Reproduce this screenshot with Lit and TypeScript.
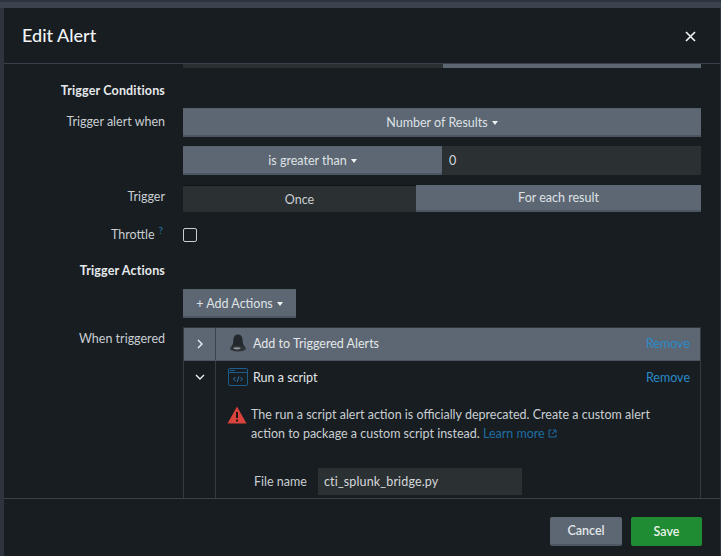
import { LitElement, html, css } from 'lit';
import { customElement } from 'lit/decorators.js';

@customElement('app-root')
export class AppRoot extends LitElement {
  static styles = css`
    :host {
      display: block;
      width: 721px;
      height: 556px;
      overflow: hidden;
      background: #2d343d;
      font-family: Lato, 'Liberation Sans', sans-serif;
      font-size: 12.5px;
      color: #c9ced2;
    }
    .top { height: 6px; margin-top: 2px; background: #3b444e; }
    .modal {
      margin: 0 1px 0 4px;
      height: 548px;
      background: #171d21;
      display: flex;
      flex-direction: column;
    }
    .head {
      flex: none;
      border-bottom: 1px solid #37424d;
      display: flex;
      align-items: center;
      justify-content: space-between;
      padding: 0 24px 2px 18px;
      box-sizing: border-box;
      height: 56px;
    }
    .head h1 {
      margin: 0;
      font-size: 18px;
      font-weight: 500;
      color: #f2f4f5;
    }
    .close { display: block; margin-top: 4px; }
    .body {
      flex: 1;
      min-height: 0;
      overflow: hidden;
      display: grid;
      grid-template-columns: 161px 518px;
      column-gap: 18px;
      align-content: start;
    }
    .sliver { grid-column: 2; display: flex; height: 4px; margin-bottom: 15px; }
    .sliver i { display: block; height: 4px; }
    .sliver .a { width: 260px; background: #2b3033; }
    .sliver .b { flex: 1; background: #5c6773; }
    .label { text-align: right; line-height: 28px; }
    .heading { font-weight: 700; color: #e6e9eb; line-height: 16px; letter-spacing: 0.15px; }
    .conditions-head { margin-bottom: 9px; }
    .btn {
      box-sizing: border-box;
      display: flex;
      align-items: center;
      justify-content: center;
      gap: 4px;
      background: #5c6773;
      color: #dfe2e5;
      border-bottom: 2px solid #4c5662;
      border-top: 1px solid #56606b;
      height: 29px;
    }
    .caret {
      width: 0;
      height: 0;
      border: 3.5px solid transparent;
      border-top: 4px solid #f0f2f3;
      border-bottom: 0;
      margin-top: 1px;
    }
    .pair { display: flex; margin-top: 9px; }
    .pair .btn { width: 259px; flex: none; }
    .field {
      background: #2b3033;
      color: #d5d8da;
      box-sizing: border-box;
      padding-left: 7px;
      display: flex;
      align-items: center;
      flex: 1;
    }
    .seg { display: flex; height: 27px; margin-top: 10px; }
    .seg div { display: flex; align-items: center; justify-content: center; box-sizing: border-box; }
    .seg .off { width: 233px; background: #2b3033; border-top: 1px solid #101416; }
    .seg .on { flex: 1; background: #5c6773; color: #dfe2e5; border-bottom: 2px solid #4c5662; }
    .trigger { margin-top: 8px; }
    .throttle { margin-top: 9px; padding-right: 2px; }
    .check-cell { height: 37px; padding-top: 16px; box-sizing: border-box; }
    .check {
      width: 14px;
      height: 14px;
      box-sizing: border-box;
      border: 1px solid #c9ced2;
      border-radius: 2px;
    }
    .help { color: #2a78ae; font-size: 10px; position: relative; top: -5px; margin-left: 4px; }
    .actions-head { margin-top: 14px; }
    .actions-gap { height: 29px; }
    .add { width: 113px; margin-top: 10px; }
    .when { margin-top: 7px; }
    .table {
      border-left: 1px solid #333a41;
      border-right: 1px solid #333a41;
      border-top: 1px solid #2d343a;
      height: 200px;
      margin-top: 9px;
    }
    .row { display: grid; grid-template-columns: 32px 1fr; }
    .row .tog { display: flex; justify-content: center; align-items: center; border-right: 1px solid #333a41; }
    .row.open .tog { align-items: flex-start; padding-top: 12px; }
    .row .main { min-width: 0; }
    .closed { background: #5c6773; border-bottom: 1px solid #4c5662; box-sizing: border-box; height: 33px; }
    .closed .tog { border-right-color: #3a424c; }
    .title { display: flex; align-items: center; gap: 5px; padding: 0 10px 0 12px; height: 32px; color: #e4e7e9; }
    .closed .title { height: 30px; }
    .title span { flex: 1; }
    .title a { flex: none; color: #2b8ac8; }
    .open { height: 170px; }
    .warn { display: flex; gap: 4px; padding: 12px 10px 0 11px; line-height: 19px; color: #c9ced2; }
    .warn > svg { flex: none; margin-top: 1px; }
    .warn p { margin: 0; width: 420px; }
    .warn a { color: #1f6da3; }
    .warn a svg { display: inline; margin: 0; }
    .file { display: flex; align-items: center; margin: 25px 0 0 38px; }
    .file label { width: 64px; }
    .file div { width: 204px; height: 27px; background: #2b3033; color: #d5d8da; padding-left: 6px; box-sizing: border-box; display: flex; align-items: center; letter-spacing: 0.15px; }
    .foot {
      flex: none;
      height: 58px;
      box-sizing: border-box;
      border-top: 1px solid #37424d;
      display: flex;
      justify-content: flex-end;
      gap: 9px;
      padding: 18px 18px 0 0;
    }
    .foot div {
      height: 29px;
      box-sizing: border-box;
      border-radius: 2px;
      display: flex;
      align-items: center;
      justify-content: center;
      font-weight: 600;
    }
    .cancel { width: 72px; background: #5c6773; color: #e4e7e9; border-bottom: 2px solid #4c5662; }
    .save { width: 71px; background: #1f8b33; color: #e8f3ea; }
  `;

  render() {
    return html`
      <div class="top"></div>
      <div class="modal">
        <div class="head">
          <h1>Edit Alert</h1>
          <svg class="close" width="11" height="11" viewBox="0 0 11 11"><path d="M1 1l9 9M10 1l-9 9" stroke="#f4f5f6" stroke-width="1.6" fill="none"/></svg>
        </div>
        <div class="body">
          <div class="sliver"><i class="a"></i><i class="b"></i></div>
          <div class="label heading conditions-head">Trigger Conditions</div>
          <div></div>

          <div class="label">Trigger alert when</div>
          <div>
            <div class="btn">Number of Results <i class="caret"></i></div>
            <div class="pair">
              <div class="btn">is greater than <i class="caret"></i></div>
              <div class="field">0</div>
            </div>
          </div>

          <div class="label trigger">Trigger</div>
          <div class="seg"><div class="off">Once</div><div class="on">For each result</div></div>

          <div class="label throttle">Throttle<span class="help">?</span></div>
          <div class="check-cell"><div class="check"></div></div>

          <div class="label heading actions-head">Trigger Actions</div>
          <div class="actions-gap"></div>

          <div></div>
          <div class="btn add">+ Add Actions <i class="caret"></i></div>

          <div class="label when">When triggered</div>
          <div class="table">
            <div class="row closed">
              <div class="tog"><svg width="8" height="10" viewBox="0 0 8 10"><path d="M2 1l4 4-4 4" stroke="#eef0f1" stroke-width="1.4" fill="none"/></svg></div>
              <div class="main title">
                <svg width="20" height="18" viewBox="0 0 20 18"><path d="M10 .5c-3.200 0-4.600 2.600-4.600 5.600 0 3.200-.7 5.200-2.400 7h14c-1.700-1.800-2.400-3.800-2.400-7 0-3-1.400-5.600-4.600-5.600z" fill="#23282c"/><ellipse cx="10" cy="14.500" rx="8" ry="3" fill="#2e3337"/><ellipse cx="9" cy="14.300" rx="3.500" ry="1.100" fill="#8c949c"/></svg>
                <span>Add to Triggered Alerts</span>
                <a>Remove</a>
              </div>
            </div>
            <div class="row open">
              <div class="tog"><svg width="10" height="8" viewBox="0 0 10 8"><path d="M1 2l4 4 4-4" stroke="#eef0f1" stroke-width="1.4" fill="none"/></svg></div>
              <div class="main">
                <div class="title">
                  <svg width="20" height="18" viewBox="0 0 20 18" fill="none"><rect x=".5" y=".5" width="19" height="17" rx="1.500" stroke="#1d5d8a"/><path d="M.5 4.500h19" stroke="#1d5d8a"/><path d="M2 2.500h5" stroke="#1d5d8a"/><path d="M7.500 9l-2 2 2 2M12.500 9l2 2-2 2M11 8.500l-2 5.500" stroke="#2a78ae"/></svg>
                  <span>Run a script</span>
                  <a>Remove</a>
                </div>
                <div class="warn">
                  <svg width="20" height="18" viewBox="0 0 20 18"><path d="M10 .5L19.500 17.500H.5z" fill="#d9433b"/><path d="M9 6h2v6H9zM9 13.500h2v2H9z" fill="#1c1416"/></svg>
                  <p>The run a script alert action is officially deprecated. Create a custom alert action to package a custom script instead. <a>Learn more <svg width="9" height="9" viewBox="0 0 9 9" fill="none"><path d="M3.500 1H1v7h7V5.500M5 1h3v3M8 1L4 5" stroke="#1f6da3"/></svg></a></p>
                </div>
                <div class="file">
                  <label>File name</label>
                  <div>cti_splunk_bridge.py</div>
                </div>
              </div>
            </div>
          </div>
        </div>
        <div class="foot">
          <div class="cancel">Cancel</div>
          <div class="save">Save</div>
        </div>
      </div>
    `;
  }
}
